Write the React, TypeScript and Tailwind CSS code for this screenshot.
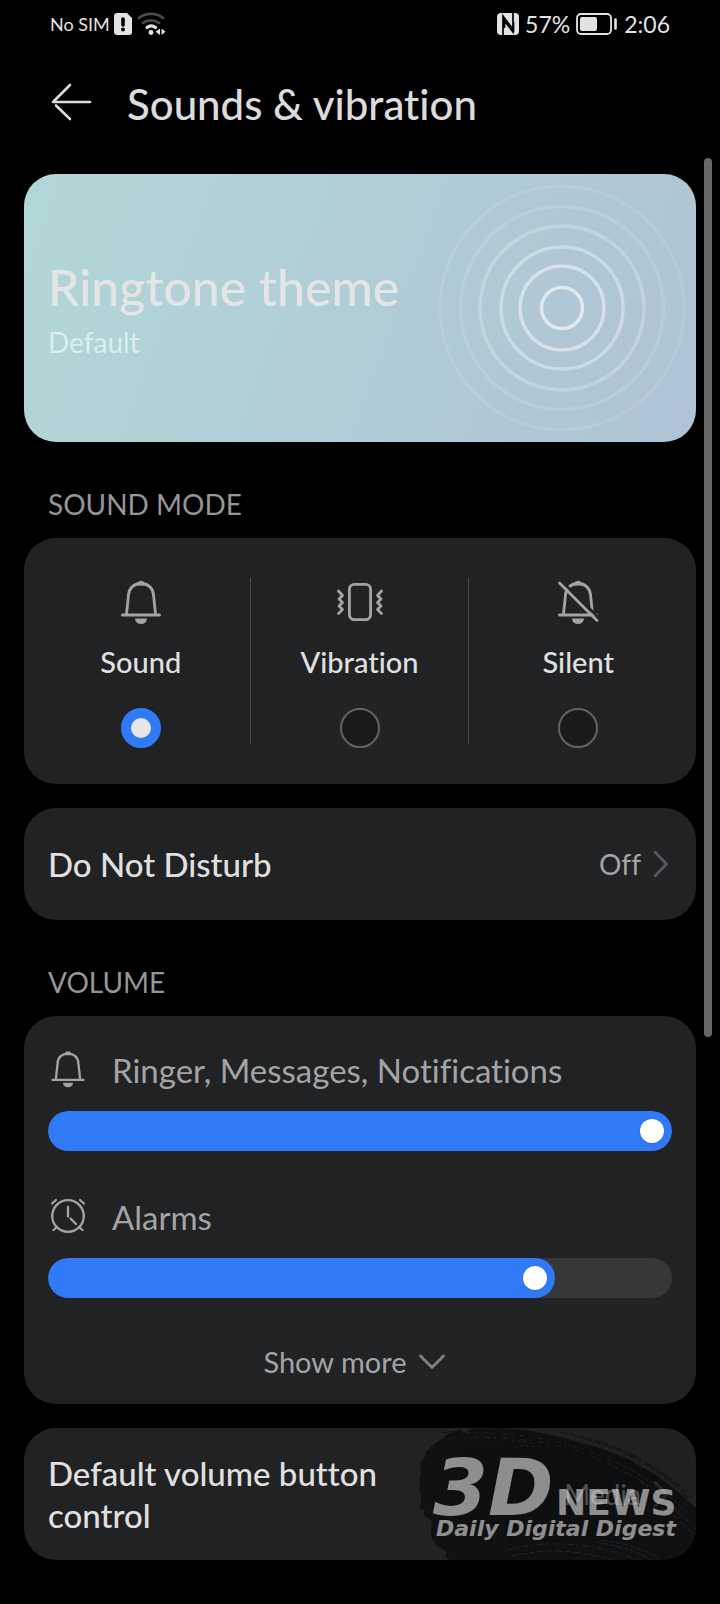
import { useState, type ReactNode } from 'react';

type Mode = 'sound' | 'vibration' | 'silent';

function StatusBar() {
    return (
        <div className="flex h-12 items-center justify-between px-[50px] text-[#e3e3e3]">
            <div className="flex items-center gap-1">
                <span className="text-lg">No SIM</span>
                <svg width="18" height="22" viewBox="0 0 18 22" aria-hidden="true">
                    <path
                        d="M3 0h10l5 5v14a3 3 0 0 1-3 3H3a3 3 0 0 1-3-3V3a3 3 0 0 1 3-3z"
                        fill="currentColor"
                    />
                    <path d="M9 6v6" stroke="#000" strokeWidth="3.6" strokeLinecap="round" />
                    <circle cx="9" cy="16.6" r="2" fill="#000" />
                </svg>
                <svg width="30" height="24" viewBox="0 0 30 24" fill="none" aria-hidden="true">
                    <g strokeWidth="2.8" strokeLinecap="round">
                        <path d="M3 6C9.500 .6 20.500 .6 27 6" stroke="#4a4a4a" />
                        <path d="M7 11c4.500-3.600 11.500-3.600 16 0" stroke="#4a4a4a" />
                        <path d="M11 15.500c2.500-2 6-2 8.500 0" stroke="currentColor" strokeWidth="3.2" />
                    </g>
                    <circle cx="15" cy="20.500" r="2.400" fill="currentColor" />
                    <path d="M24 16.500v6.500l-4.500-3.200zM25.500 16.500v6.500l4-3.200z" fill="currentColor" />
                </svg>
            </div>
            <div className="flex items-center gap-[6px] text-[23px]">
                <svg width="22" height="22" viewBox="0 0 22 22" aria-hidden="true">
                    <rect width="22" height="22" rx="4" fill="currentColor" />
                    <path
                        d="M6 22V3l10.500 14V9M16 0v19L7.500 8v7"
                        fill="none"
                        stroke="#000"
                        strokeWidth="1.700"
                    />
                </svg>
                <span>57%</span>
                <svg width="42" height="22" viewBox="0 0 42 22" fill="none" aria-hidden="true">
                    <rect x="1" y="1" width="34" height="20" rx="4" stroke="currentColor" strokeWidth="1.800" />
                    <rect x="4" y="4" width="17" height="14" rx="2" fill="currentColor" />
                    <path d="M39.500 6.500v9" stroke="currentColor" strokeWidth="2.600" strokeLinecap="round" />
                </svg>
                <span>2:06</span>
            </div>
        </div>
    );
}

function BellIcon({ size, muted = false }: { size: number; muted?: boolean }) {
    return (
        <svg width={size} height={size} viewBox="0 0 48 48" fill="none" stroke="currentColor" aria-hidden="true">
            <g strokeWidth="2.800" strokeLinecap="round" strokeLinejoin="round">
                <path d="M9.500 36l2-19C12 10 17 5.500 24 5.500s12 4.500 12.500 11.500l2 19" />
                <path d="M5.400 37h37.200" />
            </g>
            <path d="M20 5.500a4.300 4.300 0 0 1 8 0v2h-8z" fill="currentColor" stroke="none" />
            <path d="M18 40.500h12a6 5.500 0 0 1-12 0z" fill="currentColor" stroke="none" />
            {muted && (
                <>
                    <path d="M8 3.500L46 41" stroke="#212224" strokeWidth="2.600" />
                    <path d="M5.500 5L43 42.500" strokeWidth="2.800" strokeLinecap="round" />
                </>
            )}
        </svg>
    );
}

function VibrateIcon() {
    return (
        <svg
            width="48"
            height="48"
            viewBox="0 0 48 48"
            fill="none"
            stroke="currentColor"
            strokeWidth="2.800"
            strokeLinecap="round"
            strokeLinejoin="round"
            aria-hidden="true"
        >
            <rect x="13.400" y="6.400" width="21.200" height="35.200" rx="5" />
            <path d="M2.500 13l4 4.500-3.500 3.500 3.500 3.500-3.500 3.500 3.500 3.500-4 4" />
            <path d="M45.500 13l-4 4.500 3.500 3.500-3.500 3.500 3.500 3.500-3.500 3.500 4 4" />
        </svg>
    );
}

function AlarmIcon() {
    return (
        <svg
            width="40"
            height="40"
            viewBox="0 0 40 40"
            fill="none"
            stroke="currentColor"
            strokeWidth="2.300"
            strokeLinecap="round"
            aria-hidden="true"
        >
            <circle cx="20" cy="20" r="15.800" />
            <path d="M20 11v9.500M22.500 22.500l5.500 5.500" />
            <path d="M4 7.500l4-3.500M36 7.500L32 4M9 31l-3.500 3M31 31l3.500 3" />
        </svg>
    );
}

function ChevronRight() {
    return (
        <svg width="16" height="28" viewBox="0 0 16 28" fill="none" aria-hidden="true">
            <path
                d="M2 2l11.500 12L2 26"
                stroke="#56575a"
                strokeWidth="2.800"
                strokeLinecap="round"
                strokeLinejoin="round"
            />
        </svg>
    );
}

function RingtoneBanner() {
    const rings = [
        { r: 20.5, opacity: 0.6 },
        { r: 42, opacity: 0.48 },
        { r: 61, opacity: 0.36 },
        { r: 82, opacity: 0.24 },
        { r: 101.5, opacity: 0.13 },
        { r: 122, opacity: 0.1 },
    ];

    return (
        <button className="flex h-[268px] w-full items-center justify-between rounded-4xl bg-linear-110 from-[#b2d7d8] to-[#afc3d4] pr-[10px] pl-6 text-left">
            <span className="flex flex-col pt-1">
                <span className="text-[50px] leading-[64px] font-medium text-[#e3e5e7]">Ringtone theme</span>
                <span className="text-[28px] leading-[46px] text-[#daeef0]">Default</span>
            </span>
            <svg width="248" height="248" viewBox="0 0 248 248" fill="none" aria-hidden="true">
                {rings.map((ring) => (
                    <circle
                        key={ring.r}
                        cx="124"
                        cy="124"
                        r={ring.r}
                        stroke="#fff"
                        strokeWidth="3.500"
                        opacity={ring.opacity}
                    />
                ))}
            </svg>
        </button>
    );
}

function SectionTitle({ children }: { children: ReactNode }) {
    return <h2 className="px-6 pt-11 pb-4 text-[28px] leading-9 text-[#969696]">{children}</h2>;
}

function ModeOption({
    label,
    icon,
    checked,
    onSelect,
}: {
    label: string;
    icon: ReactNode;
    checked: boolean;
    onSelect: () => void;
}) {
    return (
        <label className="flex flex-1 flex-col items-center text-[#a3a4a5]">
            {icon}
            <span className="mt-[18px] text-[29px] leading-9 font-medium text-[#e0e0e0]">{label}</span>
            <input
                type="radio"
                name="sound-mode"
                checked={checked}
                onChange={onSelect}
                className="mt-7 size-10 appearance-none rounded-full border-2 border-[#626364] bg-[#1a1b1c] checked:border-[10px] checked:border-[#317af7] checked:bg-[#e6e6e6]"
            />
        </label>
    );
}

function VolumeSlider({
    id,
    label,
    icon,
    initial,
}: {
    id: string;
    label: string;
    icon: ReactNode;
    initial: number;
}) {
    const [value, setValue] = useState(initial);

    return (
        <div className="flex flex-col gap-5">
            <label htmlFor={id} className="flex h-10 items-center gap-6 text-[33px] text-[#a3a4a5]">
                <span className="pb-1">{icon}</span>
                {label}
            </label>
            <div className="relative h-10 overflow-hidden rounded-full bg-[#363739]">
                <div
                    className="flex h-full items-center justify-end rounded-full bg-[#317af7] pr-2"
                    style={{ width: `calc(40px + (100% - 40px) * ${value / 100})` }}
                >
                    <span className="size-6 rounded-full bg-white shadow" />
                </div>
                <input
                    id={id}
                    type="range"
                    min={0}
                    max={100}
                    value={value}
                    onChange={(e) => setValue(Number(e.target.value))}
                    className="absolute inset-0 w-full opacity-0"
                />
            </div>
        </div>
    );
}

function SettingRow({ title, value }: { title: string; value: string }) {
    return (
        <button className="flex min-h-28 w-full items-center justify-between rounded-4xl bg-[#212224] py-6 pr-[27px] pl-6 text-left">
            <span className="w-3/5 text-[33px] leading-[42px] font-medium text-[#e0e0e0]">{title}</span>
            <span className="flex items-center gap-3 text-[28px] text-[#a3a4a5]">
                {value}
                <ChevronRight />
            </span>
        </button>
    );
}

function Watermark() {
    return (
        <svg
            width="280"
            height="132"
            viewBox="0 0 280 132"
            className="pointer-events-none absolute top-0 right-0 rounded-r-4xl"
        >
            <path
                d="M44 2l-10 3-8 6-9 6-7 6-1 6-5 6 1 10-2 12 2 12-1 12 5 1-2 5 9 6-1 9 1 9 6 8 9 5-2 4 5 5h246V80l-20-18-20-15-26-15-30-12-36-10-32-7-30-3-30 1-8 4z"
                fill="#000"
                opacity="0.500"
            />
            <g fill="none" stroke="#000" opacity="0.400" strokeWidth="1.200">
                <path d="M144 4c44 7 90 26 126 60" strokeDasharray="9 2 4 3" />
                <path d="M156 8c42 9 84 28 116 62" strokeDasharray="6 3 12 2" />
                <path d="M26 5l20-3M30 8l14-3" />
            </g>
            <g fill="none" stroke="#2b2c2e" strokeWidth="1" opacity="0.700">
                <path d="M50 5c40-1 84 4 124 19s62 29 90 54" strokeDasharray="4 5 2 7" />
                <path d="M60 9c38 1 76 4 110 17s64 32 88 54" strokeDasharray="2 7 5 4" />
                <path d="M96 13l20 2M104 17l20 2" strokeDasharray="3 3" />
                <path d="M200 34c28 12 48 28 70 50M196 38c26 10 50 28 68 46" strokeDasharray="7 3 2 3" />
                <path d="M92 122c30-9 82-10 130 10" strokeDasharray="6 3 2 4" />
                <path d="M96 128c34-8 66-6 100 4" strokeDasharray="4 3 8 3" />
                <path d="M180 114c24 4 42 10 54 18M186 112c22 3 46 10 58 20" strokeDasharray="5 2" />
                <path d="M250 76c12 8 22 16 30 25M246 80c14 8 24 18 34 30" strokeDasharray="8 3" />
            </g>
            <g
                fill="#fff"
                opacity="0.530"
                fontFamily='"DejaVu Sans", Verdana, sans-serif'
                fontWeight="bold"
            >
                <text x="17" y="87" fontSize="79" fontStyle="italic">
                    3D
                </text>
                <text x="140" y="87" fontSize="36">
                    NEWS
                </text>
                <text x="20" y="108" fontSize="22" fontStyle="italic">
                    Daily Digital Digest
                </text>
            </g>
        </svg>
    );
}

export default function App() {
    const [mode, setMode] = useState<Mode>('sound');

    return (
        <div className="relative min-h-screen bg-black font-[Lato,sans-serif] [font-variant-ligatures:none]">
            <StatusBar />

            <header className="flex h-28 items-center gap-[35px] px-[50px] text-[#dcdcdc]">
                <button aria-label="Back" className="pb-1">
                    <svg width="42" height="38" viewBox="0 0 42 38" fill="none" aria-hidden="true">
                        <path
                            d="M20 2L3.500 18.500M40 19H3M6 22.500L20 36"
                            stroke="currentColor"
                            strokeWidth="2.600"
                            strokeLinecap="round"
                        />
                    </svg>
                </button>
                <h1 className="text-[42px] font-medium">Sounds &amp; vibration</h1>
            </header>

            <main className="px-6 pt-[14px] pb-10">
                <RingtoneBanner />

                <SectionTitle>SOUND MODE</SectionTitle>
                <div className="flex rounded-4xl bg-[#212224] pt-10 pr-[9px] pb-9 pl-2">
                    <ModeOption
                        label="Sound"
                        icon={<BellIcon size={48} />}
                        checked={mode === 'sound'}
                        onSelect={() => setMode('sound')}
                    />
                    <div className="mb-1 w-px bg-[#48494b]" />
                    <ModeOption
                        label="Vibration"
                        icon={<VibrateIcon />}
                        checked={mode === 'vibration'}
                        onSelect={() => setMode('vibration')}
                    />
                    <div className="mb-1 w-px bg-[#48494b]" />
                    <ModeOption
                        label="Silent"
                        icon={<BellIcon size={48} muted />}
                        checked={mode === 'silent'}
                        onSelect={() => setMode('silent')}
                    />
                </div>

                <div className="mt-6">
                    <SettingRow title="Do Not Disturb" value="Off" />
                </div>

                <SectionTitle>VOLUME</SectionTitle>
                <div className="rounded-4xl bg-[#212224] px-6 pt-[35px]">
                    <div className="flex flex-col gap-[47px]">
                        <VolumeSlider
                            id="ringer"
                            label="Ringer, Messages, Notifications"
                            icon={<BellIcon size={40} />}
                            initial={100}
                        />
                        <VolumeSlider id="alarms" label="Alarms" icon={<AlarmIcon />} initial={80} />
                    </div>
                    <button className="mt-[22px] flex h-[84px] w-full items-center justify-center gap-3 pr-3 text-[29px] text-[#a3a4a5]">
                        Show more
                        <svg width="26" height="16" viewBox="0 0 26 16" fill="none" aria-hidden="true">
                            <path
                                d="M1.500 2L13 13.500 24.500 2"
                                stroke="#808183"
                                strokeWidth="2.800"
                                strokeLinecap="round"
                                strokeLinejoin="round"
                            />
                        </svg>
                    </button>
                </div>

                <div className="relative mt-6">
                    <SettingRow title="Default volume button control" value="Media" />
                    <Watermark />
                </div>
            </main>

            <div className="absolute top-[158px] right-2 h-[879px] w-2 rounded-full bg-[#666]" />
        </div>
    );
}
